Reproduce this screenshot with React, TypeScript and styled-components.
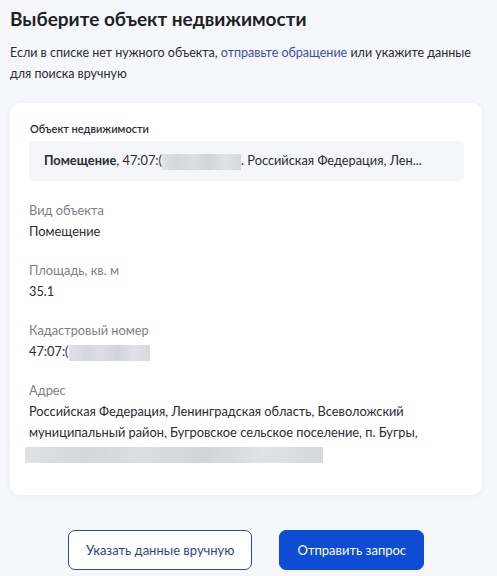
import React from "react";
import styled, { createGlobalStyle } from "styled-components";

const GlobalStyle = createGlobalStyle`
  html, body {
    margin: 0;
    padding: 0;
    background: #f5f7fb;
  }
  body {
    font-family: Lato, "Noto Sans", sans-serif;
    color: #1f1f22;
  }
`;

const Page = styled.div`
  width: 497px;
  min-height: 576px;
  box-sizing: border-box;
  padding: 6px 15px 0 10px;
  display: flex;
  flex-direction: column;
`;

const Title = styled.h1`
  margin: 0;
  font-size: 19px;
  line-height: 26px;
  font-weight: 700;
  color: #1f1f22;
`;

const Lead = styled.p`
  margin: 10px 0 0;
  font-size: 12.5px;
  line-height: 21px;
  color: #2b2b30;
`;

const Link = styled.a`
  color: #3a4ea4;
  text-decoration: none;
`;

const Card = styled.section`
  margin-top: 19px;
  background: #fff;
  border-radius: 10px;
  box-shadow: 0 1px 6px rgba(40, 60, 110, 0.06);
  padding: 18px 18px 31px 19px;
  display: flex;
  flex-direction: column;
`;

const SmallLabel = styled.div`
  font-size: 11px;
  line-height: 16px;
  font-weight: 600;
  color: #2b2b30;
  padding-left: 1px;
`;

const Picked = styled.div`
  margin-top: 4px;
  height: 40px;
  background: #f4f6f9;
  border-radius: 5px;
  display: flex;
  align-items: center;
  padding: 0 15px;
  font-size: 12.8px;
  color: #2b2b30;
  white-space: nowrap;
  overflow: hidden;

  b {
    font-weight: 700;
  }
`;

const Hidden = styled.span<{ $w: number; $shift?: number }>`
  display: inline-block;
  vertical-align: middle;
  width: ${({ $w }) => $w}px;
  height: 16px;
  margin-left: ${({ $shift }) => $shift ?? 0}px;
  background: linear-gradient(
    90deg,
    #dfe1e4 0%,
    #d5d8db 20%,
    #dcdee1 40%,
    #d2d5d8 60%,
    #e0e2e5 80%,
    #d6d9dc 100%
  );
`;

const Fields = styled.dl`
  margin: 19px 0 0;
  display: flex;
  flex-direction: column;
  gap: 18px;
`;

const Field = styled.div`
  display: flex;
  flex-direction: column;
`;

const FieldName = styled.dt`
  font-size: 12.8px;
  line-height: 21px;
  color: #7b7f86;
`;

const FieldValue = styled.dd`
  margin: 0;
  font-size: 12.8px;
  line-height: 21px;
  color: #2b2b30;
`;

const Actions = styled.div`
  margin-top: 35px;
  display: flex;
  justify-content: center;
  gap: 27px;
`;

const Button = styled.button<{ $primary?: boolean }>`
  height: 40px;
  box-sizing: border-box;
  border-radius: 7px;
  font-family: Lato, "Noto Sans", sans-serif;
  font-size: 13px;
  padding: 0 17px;
  cursor: pointer;
  border: 1px solid ${({ $primary }) => ($primary ? "#0d4cd3" : "#2d4a9e")};
  background: ${({ $primary }) => ($primary ? "#0d4cd3" : "#fff")};
  color: ${({ $primary }) => ($primary ? "#fff" : "#34438a")};
`;

export default function App() {
  return (
    <Page>
      <GlobalStyle />
      <Title>Выберите объект недвижимости</Title>
      <Lead>
        Если в списке нет нужного объекта, <Link href="#">отправьте обращение</Link> или укажите данные
        <br />
        для поиска вручную
      </Lead>
      <Card>
        <SmallLabel>Объект недвижимости</SmallLabel>
        <Picked>
          <span>
            <b>Помещение</b>, 47:07:(
            <Hidden $w={79} />. Российская Федерация, Лен...
          </span>
        </Picked>
        <Fields>
          <Field>
            <FieldName>Вид объекта</FieldName>
            <FieldValue>Помещение</FieldValue>
          </Field>
          <Field>
            <FieldName>Площадь, кв. м</FieldName>
            <FieldValue>35.1</FieldValue>
          </Field>
          <Field>
            <FieldName>Кадастровый номер</FieldName>
            <FieldValue>
              47:07:(
              <Hidden $w={81} />
            </FieldValue>
          </Field>
          <Field>
            <FieldName>Адрес</FieldName>
            <FieldValue>
              Российская Федерация, Ленинградская область, Всеволожский
              <br />
              муниципальный район, Бугровское сельское поселение, п. Бугры,
              <br />
              <Hidden $w={298} $shift={-4} />
            </FieldValue>
          </Field>
        </Fields>
      </Card>
      <Actions>
        <Button>Указать данные вручную</Button>
        <Button $primary>Отправить запрос</Button>
      </Actions>
    </Page>
  );
}
